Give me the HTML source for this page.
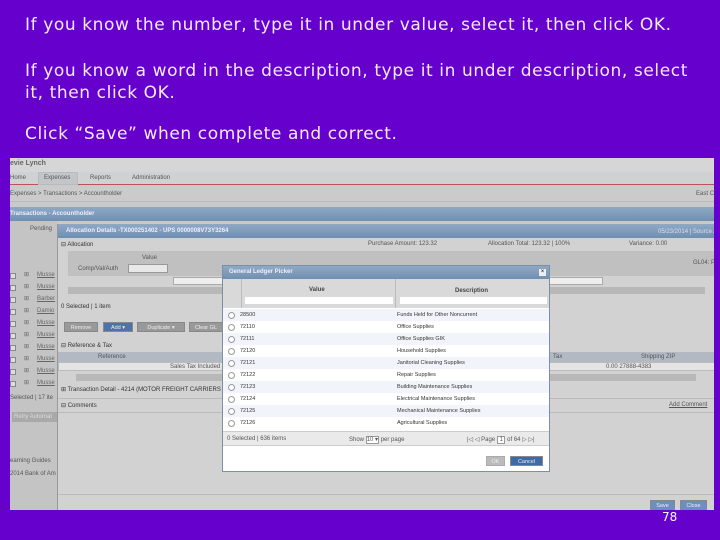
<!DOCTYPE html>
<html><head><meta charset="utf-8"><style>
*{margin:0;padding:0;box-sizing:border-box}
body{width:720px;height:540px;background:#6600cc;position:relative;overflow:hidden;font-family:"Liberation Sans",sans-serif}
.t{position:absolute;left:25px;color:#f6eaff;font-family:"DejaVu Sans",sans-serif;font-size:17px;letter-spacing:0.6px;white-space:nowrap;line-height:22px}
.a{position:absolute}
.s{font-size:6px;color:#555;white-space:nowrap;position:absolute}
.hd{background:linear-gradient(#8fa9c4,#6f8fb2);color:#eef;font-size:6px;font-weight:bold}
.row{position:absolute;left:0;width:326px;height:12px;font-size:5.5px;color:#333}
.row .r{position:absolute;left:5px;top:3px;width:7px;height:7px;border:1px solid #999;border-radius:50%;background:#fff}
.row .v{position:absolute;left:17px;top:3px}
.row .d{position:absolute;left:174px;top:3px}
.btn{position:absolute;height:10px;font-size:5.5px;color:#eee;text-align:center;line-height:10px;border:1px solid #888}
.lr{position:absolute;left:0;width:47px;height:12px;font-size:6px;color:#666}
.lr i{position:absolute;left:0;top:3px;width:6px;height:6px;border:1px solid #888;background:#ddd}
.lr b{position:absolute;left:14px;top:1px;font-weight:normal}
.lr u{position:absolute;left:27px;top:2px}
</style></head><body>
<div class="t" style="top:14px">If you know the number, type it in under value, select it, then click OK.</div>
<div class="t" style="top:60px">If you know a word in the description, type it in under description, select</div>
<div class="t" style="top:82px">it, then click OK.</div>
<div class="t" style="top:123px">Click “Save” when complete and correct.</div>

<div class="a" style="left:10px;top:158px;width:704px;height:352px;background:#c9c9c9;overflow:hidden">
 <div class="a" style="left:0;top:0;width:704px;height:14px;background:#d6d6d6"></div>
 <div class="s" style="left:0;top:2px;font-weight:bold;font-size:7px;color:#666">evie Lynch</div>
 <div class="a" style="left:0;top:14px;width:704px;height:13px;background:#cfd1d3;border-bottom:1px solid #b55"></div>
 <div class="s" style="left:0;top:17px">Home</div><div class="a" style="left:28px;top:14px;width:40px;height:13px;background:#c3c5c8;border:1px solid #bbb"></div>
 <div class="s" style="left:34px;top:17px">Expenses</div><div class="s" style="left:80px;top:17px">Reports</div><div class="s" style="left:122px;top:17px">Administration</div>
 <div class="a" style="left:0;top:28px;width:704px;height:16px;background:#cbcbcb;border-bottom:1px solid #bbb"></div>
 <div class="s" style="left:0;top:33px">Expenses &gt; Transactions &gt; Accountholder</div><div class="s" style="left:686px;top:33px">East C</div>
 <div class="a hd" style="left:0;top:49px;width:704px;height:14px;padding:4px 0 0 0">Transactions - Accountholder</div>
 <div class="a" style="left:0;top:63px;width:47px;height:289px;background:#c4c4c4"></div>
 <div class="s" style="left:20px;top:68px">Pending</div>
 <div class="lr" style="top:112px"><i></i><b>⊞</b><u>Musse</u></div>
 <div class="lr" style="top:124px"><i></i><b>⊞</b><u>Musse</u></div>
 <div class="lr" style="top:136px"><i></i><b>⊞</b><u>Barber</u></div>
 <div class="lr" style="top:148px"><i></i><b>⊞</b><u>Damio</u></div>
 <div class="lr" style="top:160px"><i></i><b>⊞</b><u>Musse</u></div>
 <div class="lr" style="top:172px"><i></i><b>⊞</b><u>Musse</u></div>
 <div class="lr" style="top:184px"><i></i><b>⊞</b><u>Musse</u></div>
 <div class="lr" style="top:196px"><i></i><b>⊞</b><u>Musse</u></div>
 <div class="lr" style="top:208px"><i></i><b>⊞</b><u>Musse</u></div>
 <div class="lr" style="top:220px"><i></i><b>⊞</b><u>Musse</u></div>
 <div class="s" style="left:0;top:237px">Selected | 17 ite</div>
 <div class="a" style="left:2px;top:254px;width:45px;height:10px;background:#a9a9a9"></div>
 <div class="s" style="left:4px;top:256px;color:#ddd">Retry Automat</div>
 <div class="s" style="left:0;top:300px">earning Guides</div><div class="s" style="left:0;top:313px">2014 Bank of Am</div>
 <div class="a" style="left:47px;top:66px;width:657px;height:286px;background:#d2d2d2;border-left:1px solid #999">
  <div class="a hd" style="left:0;top:0;width:657px;height:14px;padding:4px 0 0 8px">Allocation Details -TX000251402 - UPS 0000008V73Y3264</div>
  <div class="s" style="left:600px;top:4px;color:#dde">05/23/2014 | Source Amount : 123.32 USD ☒</div>
  <div class="s" style="left:3px;top:17px;color:#333">⊟ Allocation</div>
  <div class="s" style="left:310px;top:17px">Purchase Amount: 123.32</div><div class="s" style="left:430px;top:17px">Allocation Total: 123.32 | 100%</div><div class="s" style="left:571px;top:17px">Variance: 0.00</div>
  <div class="a" style="left:10px;top:27px;width:647px;height:25px;background:#c0c0c0"></div>
  <div class="s" style="left:20px;top:42px">Comp/Val/Auth</div><div class="s" style="left:84px;top:31px">Value</div>
  <div class="a" style="left:70px;top:40px;width:40px;height:9px;background:#e8e8e8;border:1px solid #999"></div>
  <div class="s" style="left:635px;top:36px">GL04: PROG</div>
  <div class="a" style="left:115px;top:53px;width:430px;height:8px;background:#eee;border:1px solid #aaa"></div>
  <div class="a" style="left:10px;top:63px;width:637px;height:7px;background:#b8b8b8"></div>
  <div class="s" style="left:3px;top:80px;color:#333">0 Selected | 1 item</div>
  <div class="btn" style="left:6px;top:98px;width:34px;background:#999">Remove</div>
  <div class="btn" style="left:45px;top:98px;width:30px;background:#4f73a8">Add ▾</div>
  <div class="btn" style="left:79px;top:98px;width:48px;background:#999">Duplicate ▾</div>
  <div class="btn" style="left:131px;top:98px;width:34px;background:#999">Clear GL</div>
  <div class="s" style="left:3px;top:118px;color:#333">⊟ Reference &amp; Tax</div>
  <div class="a" style="left:0;top:128px;width:657px;height:10px;background:#b2b9c2"></div>
  <div class="s" style="left:40px;top:130px">Reference</div><div class="s" style="left:495px;top:130px">Tax</div><div class="s" style="left:583px;top:130px">Shipping ZIP</div>
  <div class="a" style="left:0;top:138px;width:657px;height:9px;background:#e4e4e4;border:1px solid #bbb"></div>
  <div class="s" style="left:112px;top:140px">Sales Tax Included</div><div class="s" style="left:548px;top:140px">0.00 27888-4383</div>
  <div class="a" style="left:18px;top:150px;width:620px;height:7px;background:#b8b8b8"></div>
  <div class="s" style="left:3px;top:162px;color:#333">⊞ Transaction Detail - 4214 (MOTOR FREIGHT CARRIERS</div>
  <div class="a" style="left:0;top:174px;width:657px;height:1px;background:#bbb"></div>
  <div class="s" style="left:3px;top:178px;color:#333">⊟ Comments</div><div class="s" style="left:611px;top:178px;text-decoration:underline">Add Comment</div>
  <div class="a" style="left:0;top:188px;width:657px;height:1px;background:#bbb"></div>
  <div class="a" style="left:0;top:270px;width:657px;height:1px;background:#bbb"></div>
  <div class="btn" style="left:592px;top:276px;width:25px;background:#6d8fbf">Save</div>
  <div class="btn" style="left:622px;top:276px;width:27px;background:#6d8fbf">Close</div>
 </div>
</div>

<div class="a" style="left:222px;top:265px;width:328px;height:207px;background:#fff;border:1px solid #7a8fa8">
 <div class="a hd" style="left:0;top:0;width:326px;height:13px;padding:3px 0 0 6px">General Ledger Picker</div>
 <div class="a" style="left:316px;top:3px;width:7px;height:7px;background:#eee;font-size:6px;line-height:7px;text-align:center">×</div>
 <div class="a" style="left:0;top:13px;width:326px;height:29px;background:#d9d9d9"></div>
 <div class="a" style="left:18px;top:13px;width:1px;height:29px;background:#bbb"></div>
 <div class="a" style="left:172px;top:13px;width:1px;height:29px;background:#bbb"></div>
 <div class="s" style="left:86px;top:21px;font-weight:bold;color:#444">Value</div>
 <div class="s" style="left:232px;top:22px;font-weight:bold;color:#444">Description</div>
 <div class="a" style="left:22px;top:31px;width:148px;height:7px;background:#fff"></div>
 <div class="a" style="left:177px;top:31px;width:147px;height:7px;background:#fff"></div>
 <div class="row" style="top:43px;background:#f1f5fb"><i class="r"></i><span class="v">28500</span><span class="d">Funds Held for Other Noncurrent</span></div>
 <div class="row" style="top:55px"><i class="r"></i><span class="v">72110</span><span class="d">Office Supplies</span></div>
 <div class="row" style="top:67px;background:#f1f5fb"><i class="r"></i><span class="v">72111</span><span class="d">Office Supplies GIK</span></div>
 <div class="row" style="top:79px"><i class="r"></i><span class="v">72120</span><span class="d">Household Supplies</span></div>
 <div class="row" style="top:91px;background:#f1f5fb"><i class="r"></i><span class="v">72121</span><span class="d">Janitorial Cleaning Supplies</span></div>
 <div class="row" style="top:103px"><i class="r"></i><span class="v">72122</span><span class="d">Repair Supplies</span></div>
 <div class="row" style="top:115px;background:#f1f5fb"><i class="r"></i><span class="v">72123</span><span class="d">Building Maintenance Supplies</span></div>
 <div class="row" style="top:127px"><i class="r"></i><span class="v">72124</span><span class="d">Electrical Maintenance Supplies</span></div>
 <div class="row" style="top:139px;background:#f1f5fb"><i class="r"></i><span class="v">72125</span><span class="d">Mechanical Maintenance Supplies</span></div>
 <div class="row" style="top:151px"><i class="r"></i><span class="v">72126</span><span class="d">Agricultural Supplies</span></div>
 <div class="a" style="left:0;top:165px;width:326px;height:15px;background:#eaeaea;border-top:1px solid #ccc;border-bottom:1px solid #ccc"></div>
 <div class="s" style="left:4px;top:170px">0 Selected | 636 items</div>
 <div class="s" style="left:126px;top:170px">Show <span style="border:1px solid #999;background:#fff">10 ▾</span> per page</div>
 <div class="s" style="left:244px;top:170px">|◁ ◁ Page <span style="border:1px solid #999;background:#fff">&nbsp;1&nbsp;</span> of 64 ▷ ▷|</div>
 <div class="btn" style="left:263px;top:190px;width:19px;background:#bbb;border-color:#aaa">OK</div>
 <div class="btn" style="left:287px;top:190px;width:33px;background:#3f6aa8">Cancel</div>
</div>
<div class="a" style="left:662px;top:510px;color:#fff;font-size:12px;font-family:'DejaVu Sans',sans-serif">78</div>
</body></html>
